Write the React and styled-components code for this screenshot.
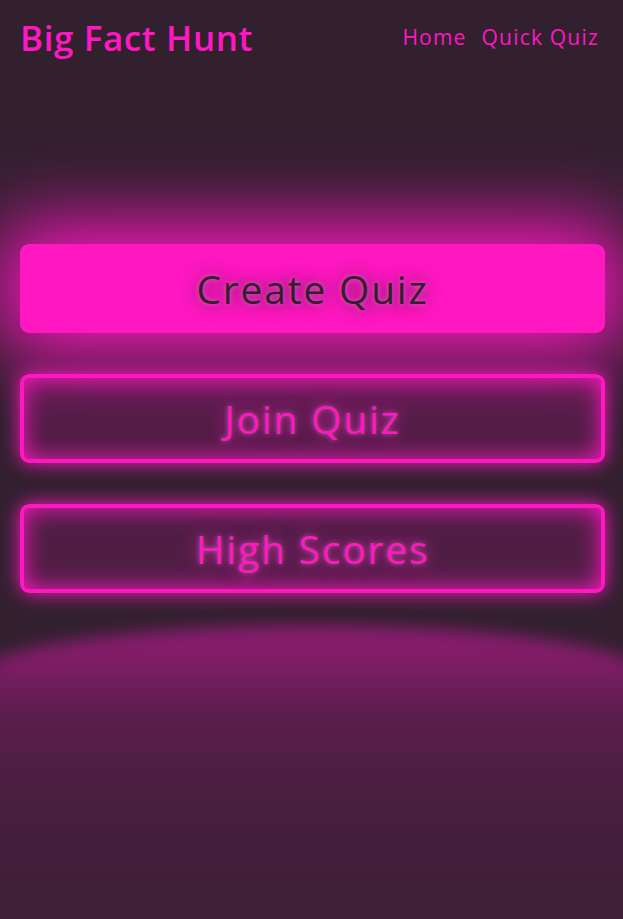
import styled, { createGlobalStyle } from "styled-components";

const neon = "#ff17c1";
const bg = "#32202f";

const GlobalStyle = createGlobalStyle`
    html, body {
        margin:0;
        padding:0;
        background:${bg};
    }
    #root{
        min-height:100vh;
    }
    *{
        box-sizing:border-box;
    }
`;

const Page = styled.div`
    position:relative;
    min-height:100vh;
    background:${bg};
    font-family:"Open Sans", "Liberation Sans", sans-serif;
    overflow:hidden;
`;
const Header = styled.header`
    display:flex;
    justify-content:space-between;
    align-items:center;
    padding:14px 24px 0 20px;
    height:60px;
`;
const Logo = styled.div`
    font-size:35px;
    font-weight:600;
    letter-spacing:0.6px;
    color:${neon};
`;
const Nav = styled.nav`
    display:flex;
    gap:15px;
    & > a{
        color:${neon};
        font-size:21px;
        text-decoration:none;
        letter-spacing:1.2px;
    }
`;
const Main = styled.main`
    display:flex;
    flex-direction:column;
    gap:41px;
    padding:184px 18px 0 20px;
`;
// glow on the floor under the last button
const reflection = `
    &::before{
        pointer-events:none;
        content:"";
        position:absolute;
        top:calc(100% + 36px);
        left:-8%;
        width:116%;
        height:340px;
        border-radius:50% 50% 0 0 / 50px 50px 0 0;
        background:linear-gradient(
            to bottom,
            rgba(255,23,193,0.42) 0,
            rgba(255,23,193,0.40) 8%,
            rgba(255,23,193,0.20) 27%,
            rgba(255,23,193,0.12) 48%,
            rgba(255,23,193,0.07) 75%,
            rgba(255,23,193,0.06) 100%
        );
        filter:blur(8px);
    }
`;
const NeonButton = styled.button`
    position:relative;
    height:89px;
    width:100%;
    font-family:inherit;
    font-size:39px;
    font-weight:400;
    letter-spacing:1.8px;
    border-radius:9px;
    cursor:pointer;
    border:4px solid ${neon};
    color:${(p) => (p.$filled ? bg : neon)};
    background:${(p) => (p.$filled ? neon : "rgba(255,23,193,0.15)")};
    text-shadow:0 0 0.125em rgba(255,255,255,0.3), 0 0 0.45em currentColor;
    box-shadow:${(p) =>
        p.$filled
            ? `0 0 2em 0.5em ${neon}`
            : `inset 0 0 0.6em 0 ${neon}, 0 0 0.5em 0 ${neon}`};
    ${(p) => (p.$reflect ? reflection : "")}
`;

export default function App() {
    return (
        <Page>
            <GlobalStyle />
            <Header>
                <Logo>Big Fact Hunt</Logo>
                <Nav>
                    <a href="#">Home</a>
                    <a href="#">Quick Quiz</a>
                </Nav>
            </Header>
            <Main>
                <NeonButton $filled>Create Quiz</NeonButton>
                <NeonButton>Join Quiz</NeonButton>
                <NeonButton $reflect>High Scores</NeonButton>
            </Main>
        </Page>
    );
}
